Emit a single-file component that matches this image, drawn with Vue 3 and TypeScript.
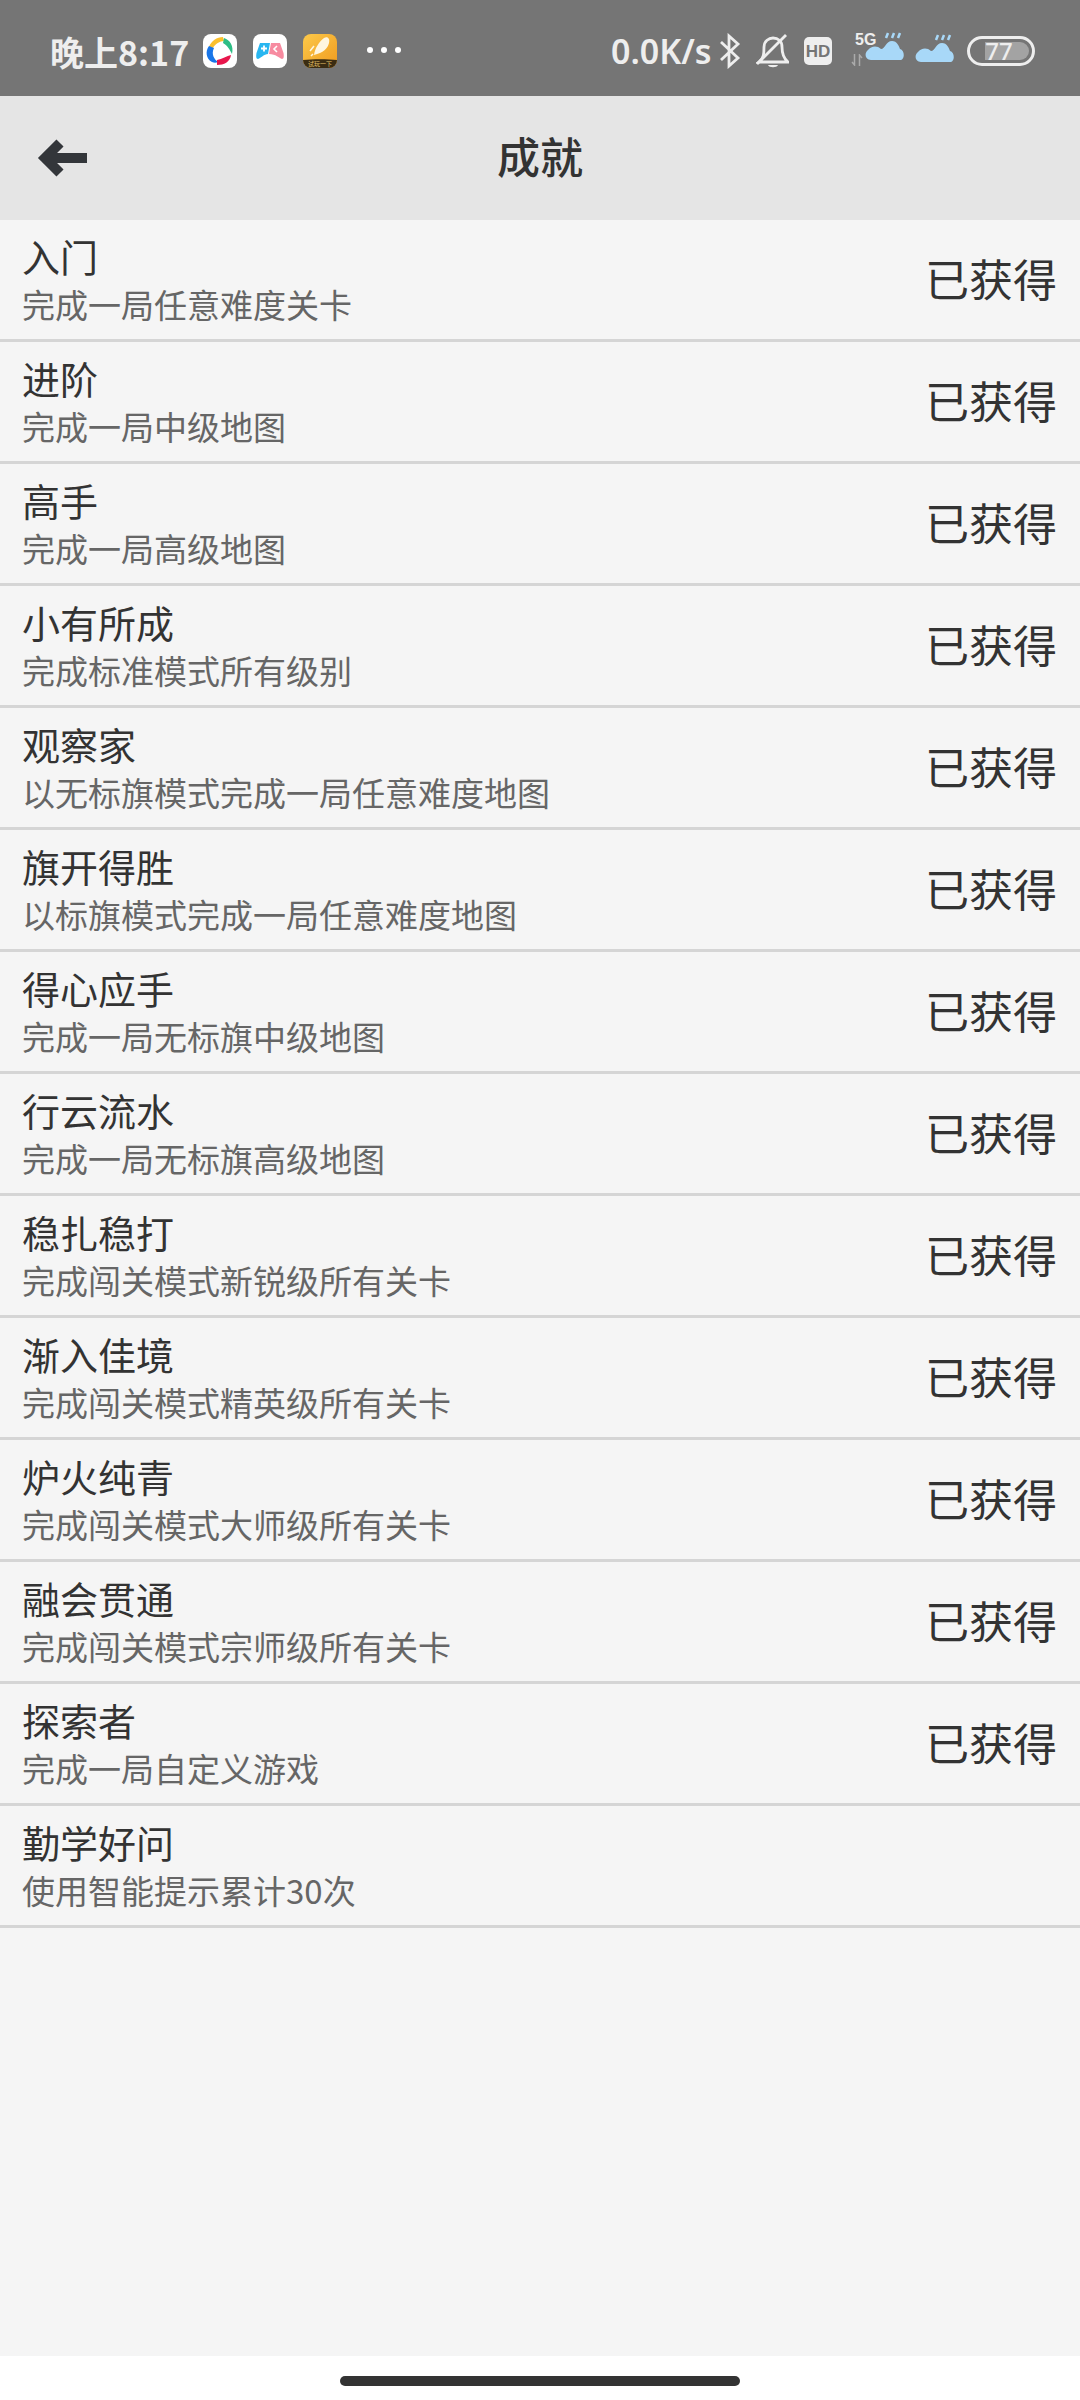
<script setup lang="ts">
const achievements = [
  { title: "入门", desc: "完成一局任意难度关卡", done: true },
  { title: "进阶", desc: "完成一局中级地图", done: true },
  { title: "高手", desc: "完成一局高级地图", done: true },
  { title: "小有所成", desc: "完成标准模式所有级别", done: true },
  { title: "观察家", desc: "以无标旗模式完成一局任意难度地图", done: true },
  { title: "旗开得胜", desc: "以标旗模式完成一局任意难度地图", done: true },
  { title: "得心应手", desc: "完成一局无标旗中级地图", done: true },
  { title: "行云流水", desc: "完成一局无标旗高级地图", done: true },
  { title: "稳扎稳打", desc: "完成闯关模式新锐级所有关卡", done: true },
  { title: "渐入佳境", desc: "完成闯关模式精英级所有关卡", done: true },
  { title: "炉火纯青", desc: "完成闯关模式大师级所有关卡", done: true },
  { title: "融会贯通", desc: "完成闯关模式宗师级所有关卡", done: true },
  { title: "探索者", desc: "完成一局自定义游戏", done: true },
  { title: "勤学好问", desc: "使用智能提示累计30次", done: false }
];
</script>

<template>
  <div class="page">
    <div class="statusbar">
      <span class="time">晚上8:17</span>
      <svg class="app-icon" viewBox="0 0 34 34">
        <rect width="34" height="34" rx="8" fill="#fff" />
        <path d="M6 13 C8 7 14 3 20 3 L21 7 C17 7 12 10 10 14 Z" fill="#fbc02d" />
        <path d="M21 4 C27 6 31 12 29 20 C27 16 24 11 20 9 Z" fill="#2ebd85" />
        <path d="M6 12 C2 17 3 25 9 28 C11 29 13 29 15 28 C11 25 8 20 11 14 Z" fill="#1976e8" />
        <path d="M14 31 C21 31 27 28 28 21 C24 22 19 25 14 26 Z" fill="#e8164c" />
      </svg>
      <svg class="app-icon" viewBox="0 0 34 34">
        <rect width="34" height="34" rx="8" fill="#fff" />
        <path d="M7 9 H17 L15 20 C11 20 8 24 5 25 C3 25 3 22 3.500 19 Z" fill="#29b6f0" />
        <path d="M18 9 H27 L30.500 19 C31 22 31 25 29 25 C26 24 23 20 16 20 Z" fill="#f78ba0" />
        <path d="M8 14.500 H14 M11 11.500 V17.500" stroke="#fff" stroke-width="1.800" />
        <path d="M24 12 L21 15 L24 18" stroke="#fff" stroke-width="1.600" fill="none" />
      </svg>
      <svg class="app-icon" viewBox="0 0 34 34">
        <defs>
          <linearGradient id="sun" x1="0" y1="0" x2="1" y2="1">
            <stop offset="0" stop-color="#fcc94a" />
            <stop offset="1" stop-color="#ef9a1e" />
          </linearGradient>
          <clipPath id="round"><rect width="34" height="34" rx="8" /></clipPath>
        </defs>
        <g clip-path="url(#round)">
          <rect width="34" height="34" fill="url(#sun)" />
          <path d="M0 26 C10 25 24 25 34 26 V34 H0 Z" fill="#3a2c12" />
          <path d="M11 21 C12 14 16 8 21 4 C25 2 27 5 26 9 C25 14 20 19 11 21 Z" fill="#fff6e0" />
          <path d="M7 17 L11 12 M8 22 L10 20" stroke="#fff6e0" stroke-width="1.500" />
          <text x="17" y="32" class="promo">试玩一下</text>
        </g>
      </svg>
      <div class="dots"><i></i><i></i><i></i></div>

      <span class="speed">0.0K/s</span>
      <svg class="bluetooth" width="22" height="36" viewBox="0 0 22 36" fill="none" stroke="#eee" stroke-width="2.800">
        <path d="M2 9 L19 25 L10 33 V3 L19 11 L2 27" />
      </svg>
      <svg class="bell" width="33" height="36" viewBox="0 0 33 36" fill="none" stroke="#eee" stroke-width="2.800">
        <path d="M3 29 C8 25 8 20 8 14 C8 8 13 5 17 5 C22 5 26 8 26 14 C26 20 27 25 32 29 Z" />
        <path d="M1 31 L30 2" />
        <path d="M12 32 H22 C21 35 13 35 12 32 Z" fill="#eee" stroke="none" />
      </svg>
      <svg class="hd" width="28" height="28" viewBox="0 0 28 28">
        <rect width="28" height="28" rx="5" fill="#eee" />
        <text x="14" y="20" class="hd-text">HD</text>
      </svg>
      <div class="net">
        <svg class="net-arrows" width="12" height="12" viewBox="0 0 12 12" fill="none" stroke="#aaa" stroke-width="1.500">
          <path d="M3.500 0 V11 L1 8 M8.500 12 V1 L11 4" />
        </svg>
        <svg class="cloud" width="40" height="32" viewBox="0 0 40 32">
          <path d="M6 28 C0 28 -1 21 3 18 C6 14 12 13 16 17 C20 17 21 9 27 9 C32 9 34 14 35 17 C40 18 40 28 35 28 Z" fill="#a8d8f8" />
          <path d="M21 6 L23 1 M27 6 L29 1 M33 6 L35 1" stroke="#a8d8f8" stroke-width="2.500" />
        </svg>
        <span class="net-label">5G</span>
      </div>
      <svg class="cloud second" width="40" height="32" viewBox="0 0 40 32">
        <path d="M6 28 C0 28 -1 21 3 18 C6 14 12 13 16 17 C20 17 21 9 27 9 C32 9 34 14 35 17 C40 18 40 28 35 28 Z" fill="#a8d8f8" />
        <path d="M21 6 L23 1 M27 6 L29 1 M33 6 L35 1" stroke="#a8d8f8" stroke-width="2.500" />
      </svg>
      <div class="battery">
        <div class="battery-level"></div>
        <span>77</span>
      </div>
    </div>

    <header class="toolbar">
      <svg class="back" width="50" height="40" viewBox="0 0 50 40" fill="none" stroke="#33363a" stroke-width="10">
        <path d="M23 5 L8 20 L23 35" />
        <path d="M10 20 H50" />
      </svg>
      <h1 class="toolbar-title">成就</h1>
    </header>

    <main class="list">
      <div v-for="item in achievements" :key="item.title" class="row">
        <div class="row-text">
          <div class="row-title">{{ item.title }}</div>
          <div class="row-desc">{{ item.desc }}</div>
        </div>
        <span v-if="item.done" class="row-state">已获得</span>
      </div>
    </main>

    <div class="navbar"><div class="home-bar"></div></div>
  </div>
</template>

<style>
html,
body {
  margin: 0;
  background: #fff;
}
</style>

<style scoped>
.page {
  width: 1080px;
  height: 2400px;
  display: flex;
  flex-direction: column;
  font-family: "Noto Sans CJK SC", "Noto Sans", sans-serif;
  overflow: hidden;
}

.statusbar {
  height: 96px;
  flex: none;
  box-sizing: border-box;
  padding: 6px 0 0 50px;
  background: #757575;
  display: flex;
  align-items: center;
  color: #eee;
}

.time {
  width: 137px;
  font-size: 34px;
  font-weight: 700;
  white-space: nowrap;
}

.app-icon {
  width: 34px;
  height: 34px;
  margin-left: 16px;
}

.promo {
  font-size: 6px;
  fill: #e9c46a;
  text-anchor: middle;
}

.dots {
  display: flex;
  gap: 8px;
  margin-left: 30px;
  margin-top: -2px;
}

.dots i {
  width: 6px;
  height: 6px;
  border-radius: 50%;
  background: #fff;
}

.speed {
  margin-left: auto;
  width: 100px;
  font-size: 34px;
  font-weight: 600;
  font-family: "Noto Sans", sans-serif;
  white-space: nowrap;
}

.bluetooth {
  margin-left: 8px;
}

.bell {
  margin-left: 15px;
}

.hd {
  margin-left: 15px;
}

.hd-text {
  font-size: 17px;
  font-weight: 700;
  fill: #757575;
  text-anchor: middle;
  font-family: "Liberation Sans", sans-serif;
}

.net {
  position: relative;
  width: 72px;
  margin-left: 2px;
  height: 36px;
}

.net-label {
  position: absolute;
  left: 21px;
  top: -1px;
  font-size: 16px;
  line-height: 16px;
  font-weight: 700;
  color: #eee;
  font-family: "Liberation Sans", sans-serif;
}

.net-arrows {
  position: absolute;
  left: 17px;
  top: 21px;
}

.net .cloud {
  position: absolute;
  left: 31px;
  top: -1px;
}

.cloud.second {
  margin-left: 9px;
  margin-top: -3px;
}

.battery {
  position: relative;
  box-sizing: border-box;
  width: 68px;
  height: 30px;
  margin: 0 45px 0 12px;
  border: 3px solid #eee;
  border-radius: 15px;
  font-size: 24px;
  line-height: 24px;
  font-weight: 500;
  font-family: "Noto Sans", sans-serif;
  text-align: center;
  color: #eee;
}

.battery span {
  position: relative;
  left: -2px;
}

.battery-level {
  position: absolute;
  left: 15px;
  top: 3px;
  bottom: 3px;
  right: 3px;
  background: #a3a3a3;
  border-radius: 0 9px 9px 0;
}

.toolbar {
  height: 124px;
  flex: none;
  display: grid;
  grid-template-columns: 1fr auto 1fr;
  align-items: center;
  background: #e5e5e5;
}

.back {
  margin-left: 37px;
}

.toolbar-title {
  margin: -6px 0 0;
  font-size: 43px;
  font-weight: 500;
  color: #333;
}

.list {
  flex: 1;
  background: #f5f5f5;
}

.row {
  box-sizing: border-box;
  height: 122px;
  padding: 0 23px 0 22px;
  border-bottom: 3px solid #d5d5d5;
  display: flex;
  align-items: center;
  justify-content: space-between;
}

.row-title {
  font-size: 38px;
  line-height: 48px;
  margin-bottom: 1px;
  color: #333;
}

.row-desc {
  font-size: 33px;
  line-height: 46px;
  color: #666;
}

.row-state {
  font-size: 44px;
  margin-top: -4px;
  color: #333;
}

.navbar {
  height: 44px;
  flex: none;
  box-sizing: border-box;
  background: #fff;
  display: flex;
  justify-content: center;
  padding-top: 20px;
}

.home-bar {
  width: 400px;
  height: 10px;
  border-radius: 5px;
  background: #333;
}
</style>
